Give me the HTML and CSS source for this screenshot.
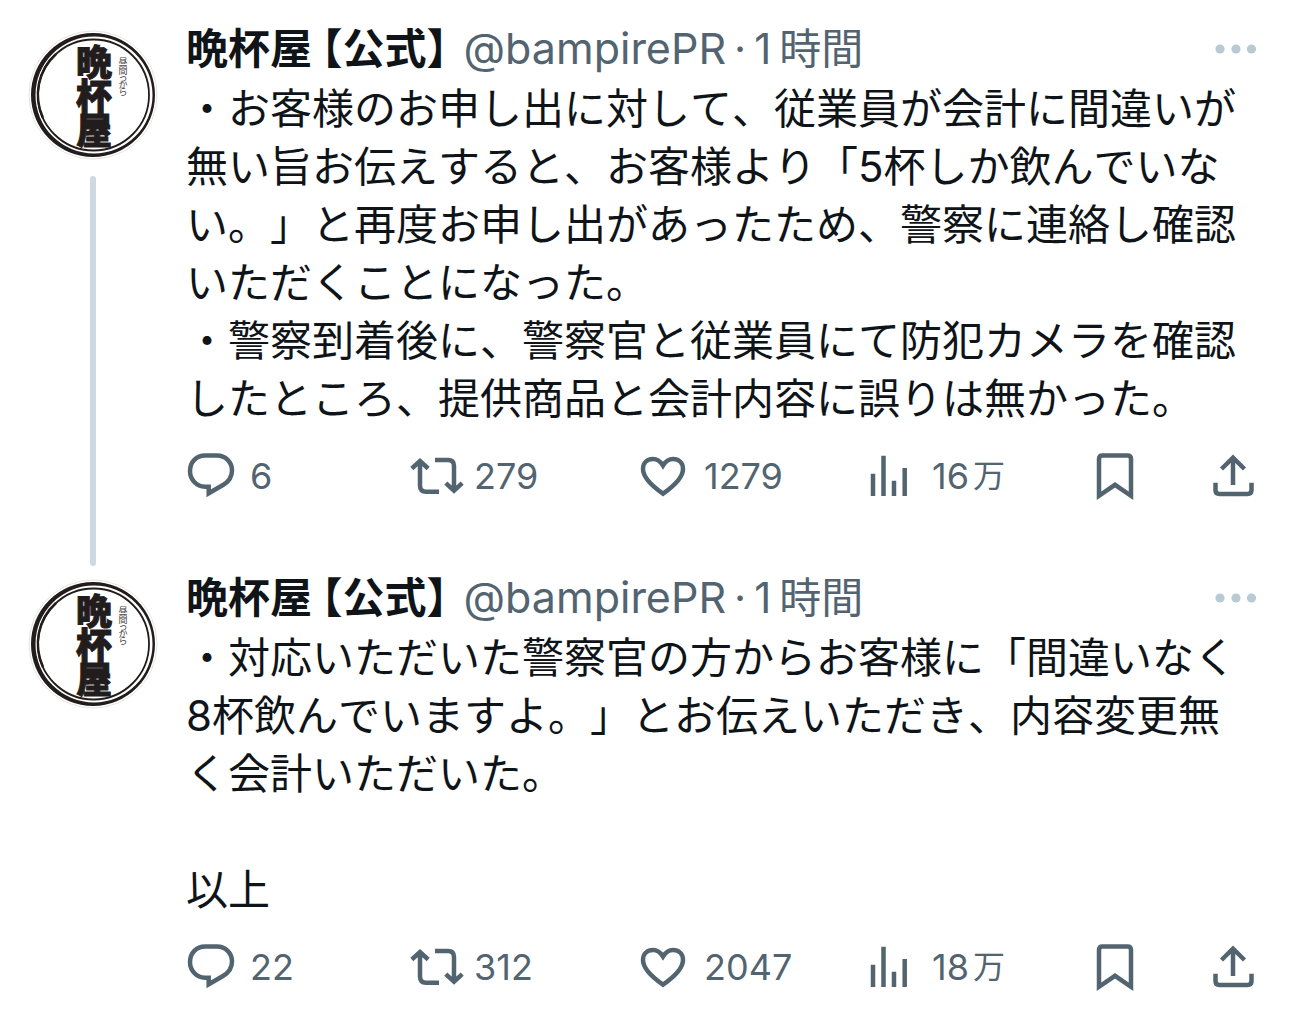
FILE: index.html
```html
<!DOCTYPE html>
<html lang="ja">
<head>
<meta charset="utf-8">
<meta name="viewport" content="width=device-width, initial-scale=1">
<title>晩杯屋【公式】</title>
<link rel="stylesheet" href="styles.css">
</head>
<body>
<svg class="sprite" aria-hidden="true">
  <symbol id="logo" viewBox="0 0 130 130">
    <circle cx="65" cy="65" r="64" fill="#fff" stroke="#e6e3e3"/>
    <path fill="#231c1c" fill-rule="evenodd" d="M65 3A62 62 0 1 1 65 127A62 62 0 1 1 65 3ZM66 6.500A58.500 58.500 0 1 0 66 123.500A58.500 58.500 0 1 0 66 6.500Z"/>
    <circle cx="65.500" cy="65" r="55.500" fill="none" stroke="#231c1c" stroke-width="1.800"/>
    <path d="M28 24A55 55 0 0 0 15 88" fill="none" stroke="#231c1c" stroke-width="2.500"/>
    <g class="logo-name" text-anchor="middle">
      <text x="66" y="46">晩</text>
      <text x="66" y="80">杯</text>
      <text x="66" y="114">屋</text>
    </g>
    <g class="logo-tagline" text-anchor="middle">
      <text x="95" y="35">昼</text>
      <text x="95" y="44">間</text>
      <text x="95" y="51">っ</text>
      <text x="95" y="58">か</text>
      <text x="95" y="65">ら</text>
    </g>
  </symbol>
  <symbol id="reply" viewBox="0 0 52 48">
    <path d="M19 3.500H31C39.500 3.500 46 10 46 18.500C46 25 43 29.500 37 33L22.700 41.300V34.700H19C10.500 34.700 4 27.500 4 19C4 10 10.500 3.500 19 3.500Z"/>
  </symbol>
  <symbol id="repost" viewBox="0 0 52 48">
    <path d="M1.800 16.500L10 9L18.200 16.500M10 10V33.500Q10 39.700 16 39.700H29M25 8H38Q44 8 44 14V38M35.800 31.200L44 38.700L52.200 31.200"/>
  </symbol>
  <symbol id="like" viewBox="0 0 52 48">
    <path d="M23 41.700C12 34 3 26 3 17C3 10.500 7.500 7 13 7C17.500 7 20.500 9.500 23 13.500C25.500 9.500 28.500 7 33 7C38.500 7 43 10.500 43 17C43 26 34 34 23 41.700Z"/>
  </symbol>
  <symbol id="views" viewBox="0 0 52 48">
    <path d="M5 21.700V44M15.500 3.700V44M26 28.700V44M36.700 16V44"/>
  </symbol>
  <symbol id="bookmark" viewBox="0 0 44 48">
    <path d="M4 43.800V7Q4 3.500 7.500 3.500H32.500Q36 3.500 36 7V43.800L20 32.800Z"/>
  </symbol>
  <symbol id="share" viewBox="0 0 44 48">
    <path d="M21 33V6M9.500 17L21 5.700L32.500 17M3.500 30.700V38Q3.500 42 7.500 42H35.500Q39.500 42 39.500 38V30.700"/>
  </symbol>
  <symbol id="more" viewBox="0 0 44 16">
    <g fill="#b9cad3" stroke="none"><circle cx="8" cy="8" r="4.600"/><circle cx="24" cy="8" r="4.600"/><circle cx="39.500" cy="8" r="4.600"/></g>
  </symbol>
</svg>

<main class="thread">
  <article class="post">
    <div class="rail">
      <a class="avatar" href="#profile" aria-label="晩杯屋"><svg><use href="#logo"/></svg></a>
      <span class="thread-line"></span>
    </div>
    <div class="content">
      <header class="head">
        <a class="name" href="#profile">晩杯屋 【公式】</a>
        <a class="handle" href="#profile">@bampirePR</a>
        <span class="dot">·</span>
        <a class="time" href="#post-1"><span class="latin">1</span><span>時間</span></a>
        <button class="more" type="button" aria-label="もっと見る"><svg><use href="#more"/></svg></button>
      </header>
      <div class="body">
        <p>・お客様のお申し出に対して、従業員が会計に間違いが無い旨お伝えすると、お客様より「<span class="latin">5</span>杯しか飲んでいない。」と再度お申し出があったため、警察に連絡し確認いただくことになった。</p>
        <p>・警察到着後に、警察官と従業員にて防犯カメラを確認したところ、提供商品と会計内容に誤りは無かった。</p>
      </div>
      <div class="actions">
        <button type="button" aria-label="返信"><svg><use href="#reply"/></svg><span>6</span></button>
        <button type="button" aria-label="リポスト"><svg><use href="#repost"/></svg><span>279</span></button>
        <button type="button" aria-label="いいね"><svg><use href="#like"/></svg><span>1279</span></button>
        <button type="button" aria-label="表示"><svg><use href="#views"/></svg><span class="views"><span>16</span><span class="unit">万</span></span></button>
        <button class="icon-only" type="button" aria-label="ブックマーク"><svg><use href="#bookmark"/></svg></button>
        <button class="icon-only" type="button" aria-label="共有"><svg><use href="#share"/></svg></button>
      </div>
    </div>
  </article>

  <article class="post">
    <div class="rail">
      <a class="avatar" href="#profile" aria-label="晩杯屋"><svg><use href="#logo"/></svg></a>
    </div>
    <div class="content">
      <header class="head">
        <a class="name" href="#profile">晩杯屋 【公式】</a>
        <a class="handle" href="#profile">@bampirePR</a>
        <span class="dot">·</span>
        <a class="time" href="#post-2"><span class="latin">1</span><span>時間</span></a>
        <button class="more" type="button" aria-label="もっと見る"><svg><use href="#more"/></svg></button>
      </header>
      <div class="body">
        <p>・対応いただいた警察官の方からお客様に「間違いなく<span class="latin">8</span>杯飲んでいますよ。」とお伝えいただき、内容変更無く会計いただいた。</p>
        <p><br></p>
        <p>以上</p>
      </div>
      <div class="actions">
        <button type="button" aria-label="返信"><svg><use href="#reply"/></svg><span>22</span></button>
        <button type="button" aria-label="リポスト"><svg><use href="#repost"/></svg><span>312</span></button>
        <button type="button" aria-label="いいね"><svg><use href="#like"/></svg><span>2047</span></button>
        <button type="button" aria-label="表示"><svg><use href="#views"/></svg><span class="views"><span>18</span><span class="unit">万</span></span></button>
        <button class="icon-only" type="button" aria-label="ブックマーク"><svg><use href="#bookmark"/></svg></button>
        <button class="icon-only" type="button" aria-label="共有"><svg><use href="#share"/></svg></button>
      </div>
    </div>
  </article>
</main>
</body>
</html>
```

FILE: styles.css
```css
* {
  box-sizing: border-box;
}

body {
  margin: 0;
  background: #fff;
  color: #0f1419;
  font-family: "Noto Sans CJK JP", "Inter", sans-serif;
  font-size: 42px;
  line-height: 58px;
}

a {
  color: inherit;
  text-decoration: none;
}

button {
  padding: 0;
  border: 0;
  background: none;
  color: inherit;
  font: inherit;
  cursor: pointer;
}

svg {
  display: block;
  flex: none;
  overflow: visible;
}

.sprite {
  position: absolute;
  width: 0;
  height: 0;
}

.sprite symbol {
  overflow: visible;
}

.thread {
  padding: 17px 34px 0 28px;
}

.post {
  display: grid;
  grid-template-columns: 130px minmax(0, 1fr);
  column-gap: 28px;
}

.rail {
  display: flex;
  flex-direction: column;
  align-items: center;
  gap: 16px;
  padding-top: 13px;
}

.avatar svg {
  width: 130px;
  height: 130px;
}

.logo-name {
  fill: #231c1c;
  stroke: #231c1c;
  stroke-width: 1px;
  font: 900 36px "Noto Sans CJK JP", sans-serif;
}

.logo-tagline {
  fill: #4a4444;
  font: 400 9px "Noto Sans CJK JP", sans-serif;
}

.thread-line {
  flex: 1;
  width: 6px;
  border-radius: 3px;
  background: #cfd9e1;
}

.content {
  padding-bottom: 66px;
}

.post:last-child .content {
  padding-bottom: 30px;
}

.head {
  display: flex;
  align-items: baseline;
  height: 58px;
  color: #536471;
  white-space: nowrap;
}

.name {
  color: #0f1419;
  font-weight: 700;
  font-feature-settings: "halt";
}

.handle {
  margin-left: 16px;
  font-family: "Inter", sans-serif;
  font-size: 43px;
}

.dot {
  margin: 0 8px;
  font-family: "Inter", sans-serif;
}

.time {
  display: flex;
  align-items: baseline;
  gap: 8px;
}

.latin {
  font-family: "Inter", sans-serif;
  line-height: 42px;
}

.more {
  align-self: center;
  margin-left: auto;
  padding-top: 6px;
}

.more svg {
  width: 44px;
  height: 16px;
}

.body {
  margin-top: 2px;
  font-kerning: none;
  text-spacing-trim: space-all;
}

.body p {
  margin: 0;
}

.actions {
  display: grid;
  grid-template-columns: 224fr 230fr 228fr 227fr 117fr 44px;
  margin-top: 27px;
  color: #536471;
  font-family: "Inter", "Noto Sans CJK JP", sans-serif;
  font-size: 36px;
  line-height: 48px;
}

.actions button {
  display: flex;
  align-items: center;
  gap: 12px;
}

.actions svg {
  width: 52px;
  height: 48px;
  fill: none;
  stroke: #536471;
  stroke-width: 4.5px;
}

.actions .icon-only svg {
  width: 44px;
}

.views {
  display: flex;
  gap: 4px;
}

.unit {
  font-size: 32px;
}
```
